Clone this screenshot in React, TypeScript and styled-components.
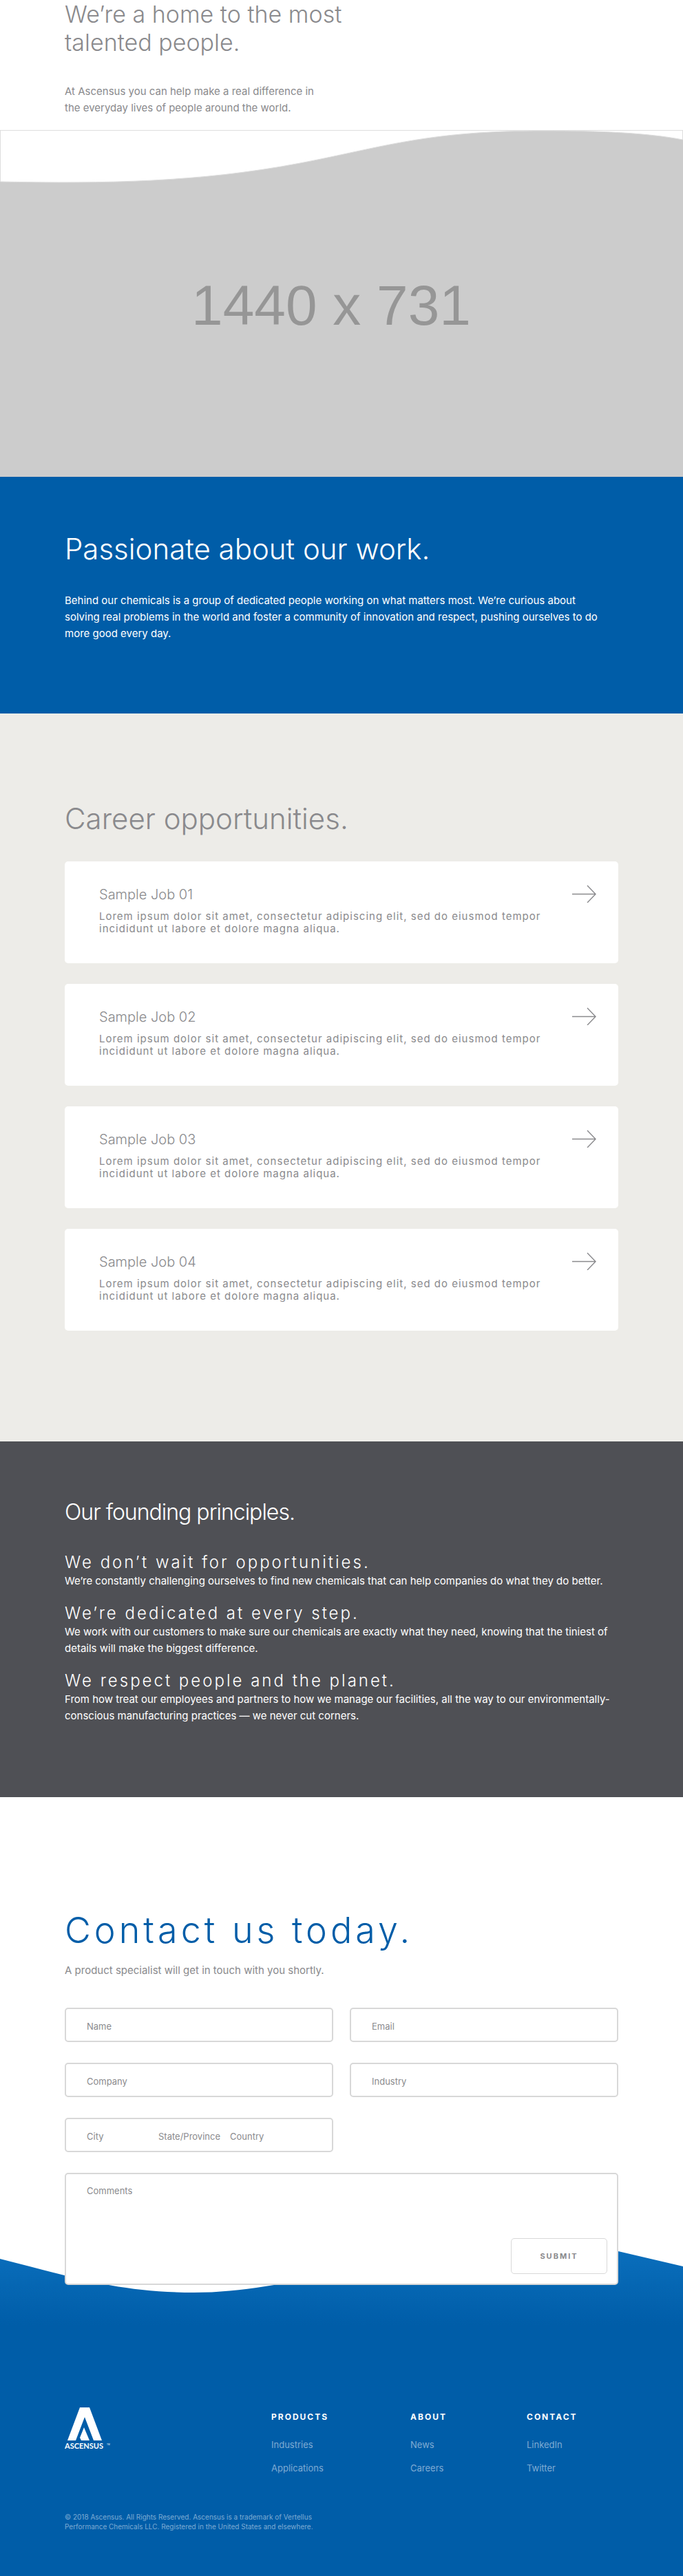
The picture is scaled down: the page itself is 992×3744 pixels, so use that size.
import React from 'react';
import styled, { createGlobalStyle } from 'styled-components';

const Global = createGlobalStyle`
  *, *::before, *::after { box-sizing: border-box; }
  body { margin: 0; background: #fff; color: #8a8a8d; font-family: Inter, "Liberation Sans", sans-serif; font-weight: 400; font-size: 15px; line-height: 24px; }
  h1, h2, h3, p, figure, ul { margin: 0; padding: 0; }
  h1, h2, h3 { font-weight: 300; }
  ul { list-style: none; }
`;

const brand = '#005da8';

const Wrap = styled.div`
  width: 100%;
  padding: 0 94px;
`;

const Hero = styled.header`
  padding-bottom: 20px;
`;

const HeroTitle = styled.h1`
  max-width: 440px;
  font-size: 34px;
  line-height: 41px;
  margin-bottom: 39px;
`;

const HeroText = styled.p`
  max-width: 370px;
`;

const Picture = styled.figure`
  svg { display: block; width: 100%; height: auto; }
`;

const PlaceholderLabel = styled.text`
  font-family: "Liberation Sans", sans-serif;
  font-size: 82px;
  font-weight: 400;
  fill: #969696;
`;

const Section = styled.section<{ $bg: string; $ink?: string; $top: number; $bottom: number }>`
  background: ${(p) => p.$bg};
  color: ${(p) => p.$ink || 'inherit'};
  padding-top: ${(p) => p.$top}px;
  padding-bottom: ${(p) => p.$bottom}px;
`;

const Title = styled.h2<{ $gap: number }>`
  font-size: 42px;
  line-height: 50px;
  margin-bottom: ${(p) => p.$gap}px;
`;

const Intro = styled.p`
  max-width: 785px;
`;

const Jobs = styled.div`
  display: flex;
  flex-direction: column;
  gap: 30px;
`;

const JobCard = styled.a`
  display: flex;
  justify-content: space-between;
  min-height: 148px;
  padding: 34px 32px 40px 50px;
  border-radius: 5px;
  background: #fff;
  color: inherit;
  text-decoration: none;
`;

const JobTitle = styled.h3`
  font-size: 20px;
  line-height: 28px;
  margin-bottom: 9px;
`;

const JobText = styled.p`
  max-width: 670px;
  font-size: 15px;
  line-height: 18px;
  letter-spacing: 1px;
`;

const ArrowIcon = styled.svg`
  flex: none;
  width: 35px;
  height: 26px;
  fill: none;
  stroke: #8a8a8d;
  stroke-width: 1.4;
`;

const PrinciplesTitle = styled.h2`
  font-size: 32px;
  line-height: 36px;
  letter-spacing: -1px;
  margin-bottom: 40px;
`;

const Principle = styled.article`
  & + & { margin-top: 20px; }
`;

const PrincipleTitle = styled.h3`
  font-size: 24px;
  line-height: 30px;
  letter-spacing: 3px;
`;

const Contact = styled.section`
  position: relative;
  padding: 162px 0 79px;
`;

const ContactWave = styled.svg`
  position: absolute;
  left: 0;
  bottom: 0;
  width: 100%;
  height: 160px;
`;

const ContactTitle = styled.h2`
  color: ${brand};
  font-size: 52px;
  line-height: 64px;
  letter-spacing: 5px;
  margin-bottom: 14px;
`;

const Form = styled.form`
  position: relative;
  display: grid;
  grid-template-columns: repeat(2, minmax(0, 1fr));
  gap: 30px 24px;
  margin-top: 42px;
`;

const field = `
  border: 2px solid #d8d8d8;
  border-radius: 5px;
  background: #fff;
`;

const control = `
  font: 400 13px/16px Inter, "Liberation Sans", sans-serif;
  color: #8a8a8d;
  outline: none;
  &::placeholder { color: #8a8a8d; opacity: 1; }
`;

const Field = styled.input`
  ${field}
  ${control}
  width: 100%;
  height: 50px;
  padding: 4px 30px 0;
`;

const Place = styled.div`
  ${field}
  display: flex;
  height: 50px;
  padding: 4px 44px 0 30px;
`;

const PlaceInput = styled.input`
  ${control}
  flex: 1;
  min-width: 0;
  padding: 0;
  border: 0;
  background: transparent;
`;

const CommentBox = styled.div`
  ${field}
  grid-column: 1 / -1;
  display: flex;
  align-items: flex-end;
  height: 163px;
  padding: 16px 14px 14px 30px;
`;

const Comment = styled.textarea`
  ${control}
  flex: 1;
  align-self: stretch;
  padding: 0;
  border: 0;
  background: transparent;
  resize: none;
`;

const Submit = styled.button`
  width: 140px;
  height: 52px;
  border: 1px solid #d8d8d8;
  border-radius: 5px;
  background: #fff;
  color: #8a8a8d;
  font: 700 11px/16px Inter, "Liberation Sans", sans-serif;
  letter-spacing: 2px;
`;

const Footer = styled.footer`
  background: ${brand};
  color: #7fabd3;
  padding: 99px 0 65px;
`;

const FooterTop = styled.div`
  display: flex;
`;

const LogoLink = styled.a`
  flex: 0 0 300px;
  svg { display: block; width: 66px; height: 62px; }
`;

const FooterNav = styled.nav`
  flex: 1;
  display: grid;
  grid-template-columns: 202px 169px 1fr;
  padding-top: 4px;
`;

const FooterTitle = styled.h3`
  color: #fff;
  font-size: 12px;
  line-height: 20px;
  font-weight: 700;
  letter-spacing: 2px;
  margin-bottom: 13px;
`;

const FooterLink = styled.a`
  display: block;
  color: inherit;
  font-size: 13px;
  line-height: 34px;
  text-decoration: none;
`;

const Legal = styled.p`
  max-width: 370px;
  margin-top: 47px;
  font-size: 10px;
  line-height: 14px;
`;

const jobs = ['Sample Job 01', 'Sample Job 02', 'Sample Job 03', 'Sample Job 04'];

const principles = [
  {
    title: 'We don’t wait for opportunities.',
    text: 'We’re constantly challenging ourselves to find new chemicals that can help companies do what they do better.',
  },
  {
    title: 'We’re dedicated at every step.',
    text: 'We work with our customers to make sure our chemicals are exactly what they need, knowing that the tiniest of details will make the biggest difference.',
  },
  {
    title: 'We respect people and the planet.',
    text: 'From how treat our employees and partners to how we manage our facilities, all the way to our environmentally-conscious manufacturing practices — we never cut corners.',
  },
];

const footerColumns = [
  { title: 'PRODUCTS', links: ['Industries', 'Applications'] },
  { title: 'ABOUT', links: ['News', 'Careers'] },
  { title: 'CONTACT', links: ['LinkedIn', 'Twitter'] },
];

function Arrow() {
  return (
    <ArrowIcon viewBox="0 0 35 26" aria-hidden="true">
      <path d="M0 13.5H34M22 1L34 13.5L22 26" />
    </ArrowIcon>
  );
}

function Logo() {
  return (
    <svg viewBox="0 0 66 62" role="img" aria-label="Ascensus">
      <path fill="#fff" d="M22 0H36L54 48H42L29 14L16 48H4Z" />
      <path fill="#fff" d="M28 29L36 48H24L22 44Z" />
      <text x="0" y="60" fill="#fff" fontSize="11" fontWeight="700" fontFamily="Lato, sans-serif">ASCENSUS</text>
      <text x="61" y="55" fill="#fff" fontSize="3">TM</text>
    </svg>
  );
}

export default function App() {
  return (
    <>
      <Global />
      <Hero>
        <Wrap>
          <HeroTitle>We’re a home to the most talented people.</HeroTitle>
          <HeroText>At Ascensus you can help make a real difference in the everyday lives of people around the world.</HeroText>
        </Wrap>
      </Hero>
      <Picture>
        <svg viewBox="0 0 992 504" role="img" aria-label="1440 x 731">
          <rect width="992" height="504" fill="#ccc" />
          <path
            fill="#fff"
            stroke="#dedede"
            d="M0.5 0.5H991.5V14C940 4 870 1 790 1C620 1 556 25 436 48C290 76 150 78 0.5 75Z"
          />
          <PlaceholderLabel x="481" y="283" textAnchor="middle">1440 x 731</PlaceholderLabel>
        </svg>
      </Picture>

      <Section $bg={brand} $ink="#fff" $top={80} $bottom={104}>
        <Wrap>
          <Title $gap={38}>Passionate about our work.</Title>
          <Intro>
            Behind our chemicals is a group of dedicated people working on what matters most. We’re curious about solving real
            problems in the world and foster a community of innovation and respect, pushing ourselves to do more good every day.
          </Intro>
        </Wrap>
      </Section>

      <Section $bg="#edece8" $top={128} $bottom={161}>
        <Wrap>
          <Title $gap={37}>Career opportunities.</Title>
          <Jobs>
            {jobs.map((job) => (
              <JobCard href="#" key={job}>
                <div>
                  <JobTitle>{job}</JobTitle>
                  <JobText>
                    Lorem ipsum dolor sit amet, consectetur adipiscing elit, sed do eiusmod tempor incididunt ut labore et dolore
                    magna aliqua.
                  </JobText>
                </div>
                <Arrow />
              </JobCard>
            ))}
          </Jobs>
        </Wrap>
      </Section>

      <Section $bg="#4f5055" $ink="#fff" $top={85} $bottom={106}>
        <Wrap>
          <PrinciplesTitle>Our founding principles.</PrinciplesTitle>
          {principles.map((item) => (
            <Principle key={item.title}>
              <PrincipleTitle>{item.title}</PrincipleTitle>
              <p>{item.text}</p>
            </Principle>
          ))}
        </Wrap>
      </Section>

      <Contact>
        <ContactWave viewBox="0 0 992 160" preserveAspectRatio="none" aria-hidden="true">
          <defs>
            <linearGradient id="wave" gradientUnits="userSpaceOnUse" x1="0" y1="20" x2="0" y2="140">
              <stop offset="0" stopColor="#0b70be" />
              <stop offset="1" stopColor={brand} />
            </linearGradient>
          </defs>
          <path fill="url(#wave)" d="M0 43C100 68 170 92 282 92C450 92 620 10 760 10C820 10 860 22 898 32L992 54V160H0Z" />
        </ContactWave>
        <Wrap>
          <ContactTitle>Contact us today.</ContactTitle>
          <p>A product specialist will get in touch with you shortly.</p>
          <Form onSubmit={(e) => e.preventDefault()}>
            <Field aria-label="Name" placeholder="Name" />
            <Field aria-label="Email" placeholder="Email" type="email" />
            <Field aria-label="Company" placeholder="Company" />
            <Field aria-label="Industry" placeholder="Industry" />
            <Place>
              <PlaceInput aria-label="City" placeholder="City" />
              <PlaceInput aria-label="State/Province" placeholder="State/Province" />
              <PlaceInput aria-label="Country" placeholder="Country" />
            </Place>
            <CommentBox>
              <Comment aria-label="Comments" placeholder="Comments" />
              <Submit type="submit">SUBMIT</Submit>
            </CommentBox>
          </Form>
        </Wrap>
      </Contact>

      <Footer>
        <Wrap>
          <FooterTop>
            <LogoLink href="#">
              <Logo />
            </LogoLink>
            <FooterNav>
              {footerColumns.map((col) => (
                <div key={col.title}>
                  <FooterTitle>{col.title}</FooterTitle>
                  <ul>
                    {col.links.map((link) => (
                      <li key={link}>
                        <FooterLink href="#">{link}</FooterLink>
                      </li>
                    ))}
                  </ul>
                </div>
              ))}
            </FooterNav>
          </FooterTop>
          <Legal>
            © 2018 Ascensus. All Rights Reserved. Ascensus is a trademark of Vertellus Performance Chemicals LLC. Registered in the
            United States and elsewhere.
          </Legal>
        </Wrap>
      </Footer>
    </>
  );
}
